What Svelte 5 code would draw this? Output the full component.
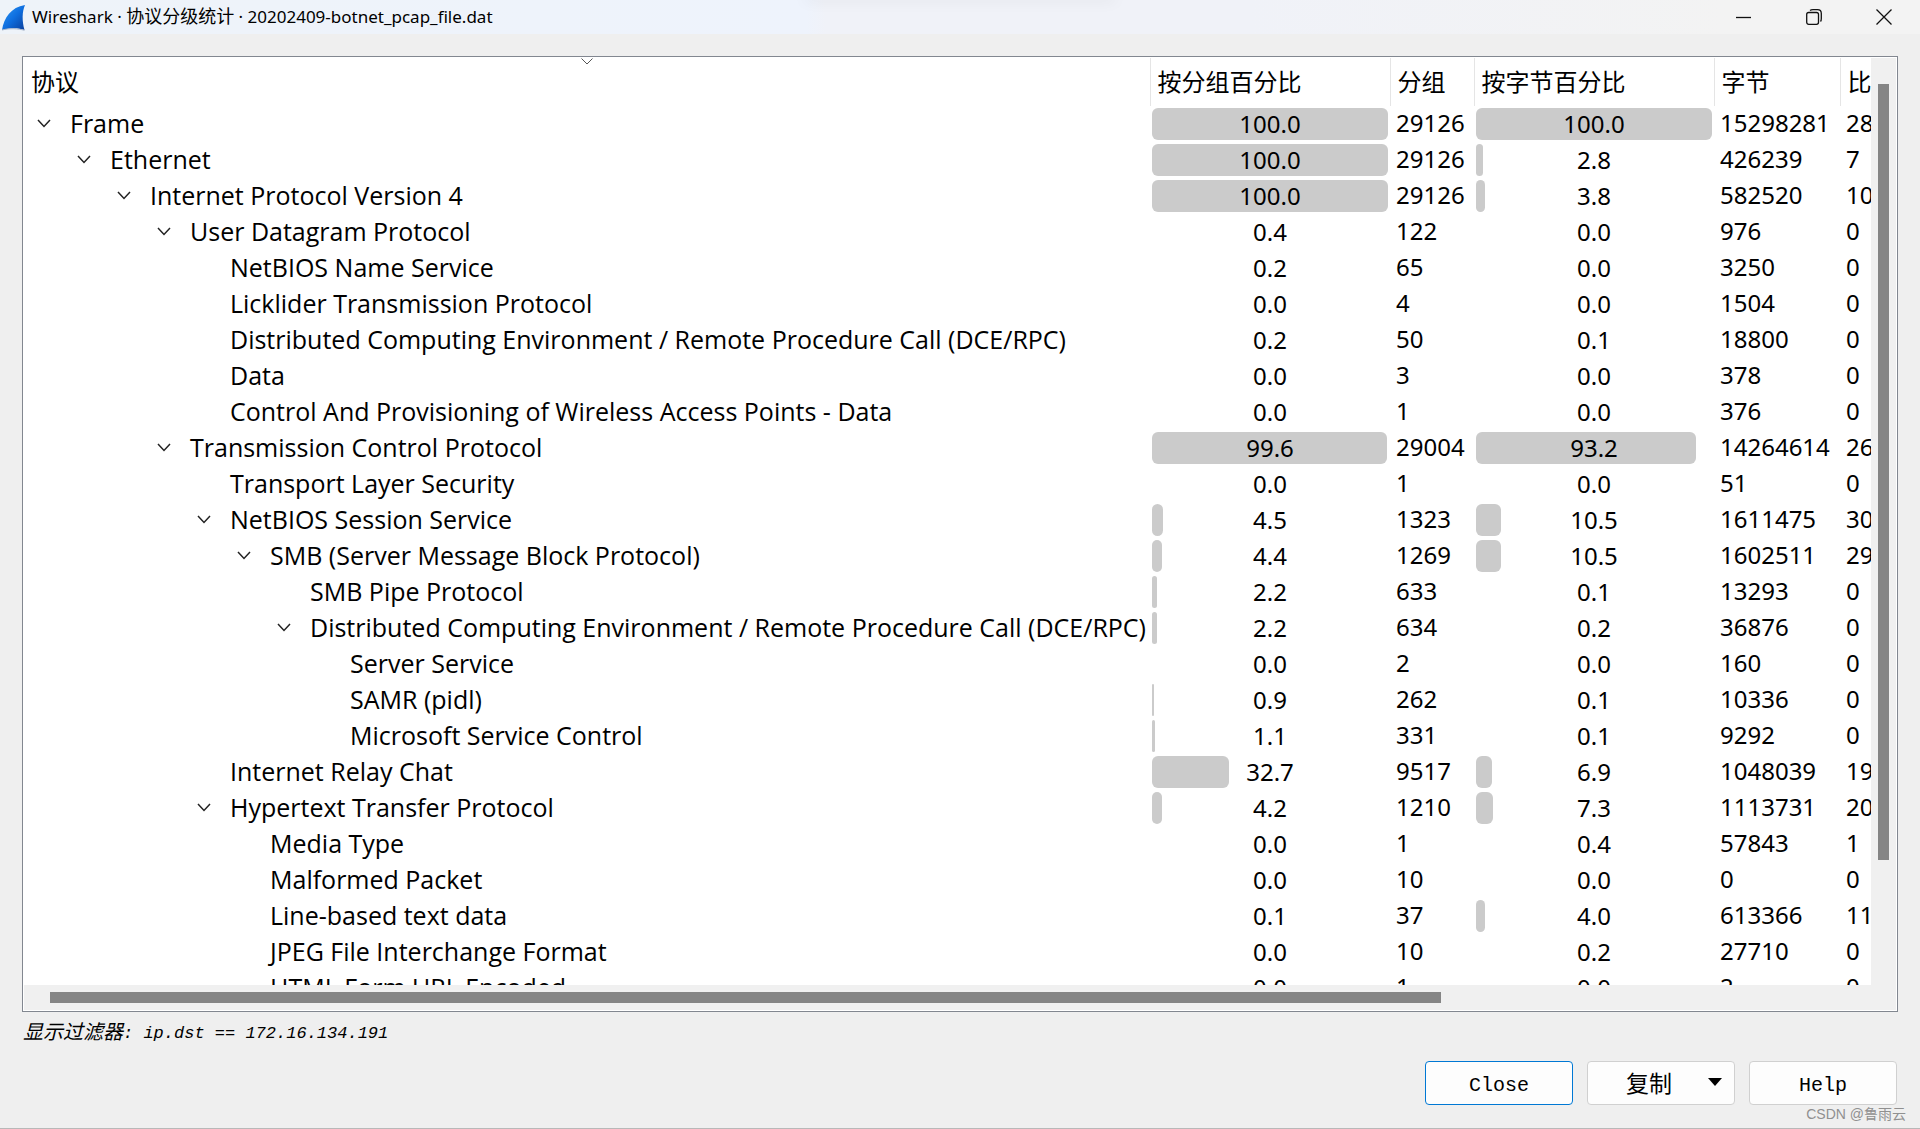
<script>
  const rows = [
    [0, true, 'Frame', 100.0, '29126', 100.0, '15298281', '28 k'],
    [1, true, 'Ethernet', 100.0, '29126', 2.8, '426239', '7'],
    [2, true, 'Internet Protocol Version 4', 100.0, '29126', 3.8, '582520', '10 k'],
    [3, true, 'User Datagram Protocol', 0.4, '122', 0.0, '976', '0'],
    [4, false, 'NetBIOS Name Service', 0.2, '65', 0.0, '3250', '0'],
    [4, false, 'Licklider Transmission Protocol', 0.0, '4', 0.0, '1504', '0'],
    [4, false, 'Distributed Computing Environment / Remote Procedure Call (DCE/RPC)', 0.2, '50', 0.1, '18800', '0'],
    [4, false, 'Data', 0.0, '3', 0.0, '378', '0'],
    [4, false, 'Control And Provisioning of Wireless Access Points - Data', 0.0, '1', 0.0, '376', '0'],
    [3, true, 'Transmission Control Protocol', 99.6, '29004', 93.2, '14264614', '26 k'],
    [4, false, 'Transport Layer Security', 0.0, '1', 0.0, '51', '0'],
    [4, true, 'NetBIOS Session Service', 4.5, '1323', 10.5, '1611475', '30'],
    [5, true, 'SMB (Server Message Block Protocol)', 4.4, '1269', 10.5, '1602511', '29'],
    [6, false, 'SMB Pipe Protocol', 2.2, '633', 0.1, '13293', '0'],
    [6, true, 'Distributed Computing Environment / Remote Procedure Call (DCE/RPC)', 2.2, '634', 0.2, '36876', '0'],
    [7, false, 'Server Service', 0.0, '2', 0.0, '160', '0'],
    [7, false, 'SAMR (pidl)', 0.9, '262', 0.1, '10336', '0'],
    [7, false, 'Microsoft Service Control', 1.1, '331', 0.1, '9292', '0'],
    [4, false, 'Internet Relay Chat', 32.7, '9517', 6.9, '1048039', '19'],
    [4, true, 'Hypertext Transfer Protocol', 4.2, '1210', 7.3, '1113731', '20'],
    [5, false, 'Media Type', 0.0, '1', 0.4, '57843', '1'],
    [5, false, 'Malformed Packet', 0.0, '10', 0.0, '0', '0'],
    [5, false, 'Line-based text data', 0.1, '37', 4.0, '613366', '11'],
    [5, false, 'JPEG File Interchange Format', 0.0, '10', 0.2, '27710', '0'],
    [5, false, 'HTML Form URL Encoded', 0.0, '1', 0.0, '2', '0'],
  ].map(([depth, open, name, packetPct, packets, bytePct, bytes, bits]) => ({
    depth, open, name, packetPct, packets, bytePct, bytes, bits,
  }));
</script>

{#snippet meter(value)}
  <div class="meter">
    {#if value >= 0.5}
      <div class="fill" style:width="{value}%"></div>
    {/if}
    <span>{value.toFixed(1)}</span>
  </div>
{/snippet}

<div class="window">
  <header class="titlebar">
    <svg class="logo" viewBox="0 0 24 27" aria-hidden="true">
      <defs>
        <linearGradient id="fin" x1="0" y1="0" x2="1" y2="1">
          <stop offset="0" stop-color="#2f9bf5" />
          <stop offset="0.5" stop-color="#0f6fe0" />
          <stop offset="1" stop-color="#0a3f9c" />
        </linearGradient>
      </defs>
      <path d="M0 26C2 14 9 3 23 1C20 8 20 17 22.500 26C15 23.500 8 24 0 26Z" fill="url(#fin)" />
      <path d="M0 26C8 24 16 24.500 22.500 26.300" fill="none" stroke="#a8b4c8" />
    </svg>
    <h1>Wireshark · <span class="han">协议分级统计</span> · 20202409-botnet_pcap_file.dat</h1>
    <div class="controls">
      <button type="button" aria-label="Minimize">
        <svg viewBox="0 0 16 16"><path d="M0 8.500H15" /></svg>
      </button>
      <button type="button" aria-label="Restore">
        <svg viewBox="0 0 16 16">
          <rect x="0.700" y="3.500" width="11.800" height="11.800" rx="2" />
          <path d="M4 1.500C5 0.700 6 0.700 7 0.700H11.500C14 0.700 15.300 2 15.300 4.500V9.500C15.300 11 15 12 14.500 12.500" />
        </svg>
      </button>
      <button type="button" aria-label="Close window">
        <svg viewBox="0 0 16 16"><path d="M0.500 0.500L15.500 15.500M15.500 0.500L0.500 15.500" /></svg>
      </button>
    </div>
  </header>

  <main>
    <div class="panel">
      <div class="viewport">
        <table>
          <colgroup>
            <col />
            <col class="c-pct" />
            <col class="c-packets" />
            <col class="c-pct" />
            <col class="c-bytes" />
            <col class="c-bits" />
          </colgroup>
          <thead>
            <tr>
              <th scope="col">
                协议
                <svg class="sort" viewBox="0 0 12 7" aria-hidden="true"><path d="M0.500 0.500L6 6L11.500 0.500" /></svg>
              </th>
              <th scope="col">按分组百分比</th>
              <th scope="col">分组</th>
              <th scope="col">按字节百分比</th>
              <th scope="col">字节</th>
              <th scope="col">比特/秒</th>
            </tr>
          </thead>
          <tbody>
            {#each rows as row}
              <tr>
                <td>
                  <div class="node" style:padding-left="{row.depth * 40}px">
                    {#if row.open}
                      <button type="button" class="toggle" aria-label="Collapse {row.name}" aria-expanded="true">
                        <svg viewBox="0 0 14 9"><path d="M1 1L7 7.500L13 1" /></svg>
                      </button>
                    {:else}
                      <span class="toggle"></span>
                    {/if}
                    <span class="name">{row.name}</span>
                  </div>
                </td>
                <td class="pct">{@render meter(row.packetPct)}</td>
                <td>{row.packets}</td>
                <td class="pct">{@render meter(row.bytePct)}</td>
                <td>{row.bytes}</td>
                <td>{row.bits}</td>
              </tr>
            {/each}
          </tbody>
        </table>
      </div>
      <div class="vbar"><div class="thumb"></div></div>
      <div class="hbar"><div class="thumb"></div></div>
    </div>

    <p class="filter"><span class="label">显示过滤器</span><span>: ip.dst == 172.16.134.191</span></p>

    <footer>
      <button type="button" class="action primary">Close</button>
      <button type="button" class="action menu">
        <span>复制</span>
        <svg viewBox="0 0 14 8" aria-hidden="true"><path d="M0 0H14L7 8Z" /></svg>
      </button>
      <button type="button" class="action">Help</button>
    </footer>
  </main>
  <div class="watermark">CSDN @鲁雨云</div>
</div>

<style>
  :global(body) {
    margin: 0;
    background: #efefef;
  }

  .window {
    position: relative;
    box-sizing: border-box;
    display: flex;
    flex-direction: column;
    height: 100vh;
    overflow: hidden;
    border-bottom: 1px solid #b8b8b8;
    background: #efefef;
    color: #000;
    font-family: 'Noto Sans', 'Noto Sans CJK SC', sans-serif;
  }

  .titlebar {
    position: relative;
    display: flex;
    align-items: center;
    height: 34px;
    padding: 0 1px 0 2px;
    background: linear-gradient(90deg, #eef3f9, #eef3fc 42%, #f0f2f8 43%, #f0f2f8 65%, #f3f3f3 90%);
  }

  .titlebar::before {
    position: absolute;
    top: -2px;
    left: 42%;
    width: 16%;
    height: 1px;
    box-shadow: 0 0 14px 2px rgb(0 0 0 / 8%);
    content: '';
  }

  .logo {
    width: 24px;
    height: 27px;
  }

  h1 {
    flex: 1;
    margin: 0 0 0 6px;
    font-size: 17px;
    font-weight: 400;
    line-height: 34px;
    white-space: nowrap;
  }

  .han {
    font-size: 18px;
    line-height: 1;
  }

  .controls {
    display: flex;
  }

  .controls button {
    display: grid;
    place-items: center;
    width: 70px;
    height: 34px;
    padding: 0;
    border: 0;
    background: none;
  }

  .controls svg {
    width: 16px;
    height: 16px;
    fill: none;
    stroke: #111;
    stroke-width: 1.3;
  }

  main {
    display: flex;
    flex: 1;
    flex-direction: column;
    min-height: 0;
    padding: 22px 22px 23px;
  }

  .panel {
    display: grid;
    flex: 1;
    grid-template-rows: minmax(0, 1fr) 25px;
    grid-template-columns: minmax(0, 1fr) 25px;
    min-height: 0;
    padding: 1px;
    border: 1px solid #828790;
    background: #fff;
  }

  .viewport {
    overflow: hidden;
  }

  table {
    width: 100%;
    border-collapse: collapse;
    table-layout: fixed;
    font-size: 24px;
    line-height: 34px;
  }

  .c-pct {
    width: 240px;
  }

  .c-packets {
    width: 84px;
  }

  .c-bytes {
    width: 126px;
  }

  .c-bits {
    width: 31px;
  }

  th,
  td {
    box-sizing: border-box;
    overflow: hidden;
    height: 36px;
    padding: 0 0 0 6px;
    text-align: left;
    vertical-align: top;
    white-space: nowrap;
  }

  th {
    position: relative;
    height: 48px;
    padding-left: 7px;
    border-left: 1px solid #e5e5e5;
    font-weight: 400;
    line-height: 48px;
  }

  th:first-child {
    border-left: 0;
  }

  td:first-child {
    padding-left: 0;
  }

  .sort {
    position: absolute;
    top: 0;
    left: 50%;
    width: 12px;
    height: 7px;
    margin-left: -6px;
    fill: none;
    stroke: #555;
  }

  .node {
    display: flex;
    align-items: center;
  }

  .name {
    font-family: 'Open Sans', 'Noto Sans', sans-serif;
    font-size: 25px;
  }

  .toggle {
    display: grid;
    flex: none;
    place-items: center;
    width: 40px;
    height: 34px;
    margin-right: 6px;
    padding: 0;
    border: 0;
    background: none;
  }

  .toggle svg {
    width: 14px;
    height: 9px;
    fill: none;
    stroke: #222;
    stroke-width: 1.5;
  }

  td.pct {
    padding: 2px 2px 0;
  }

  .meter {
    position: relative;
    height: 32px;
    line-height: 32px;
    text-align: center;
  }

  .meter .fill {
    position: absolute;
    top: 0;
    left: 0;
    height: 100%;
    border-radius: 6px;
    background: #cbcbcb;
  }

  .meter span {
    position: relative;
  }

  .vbar,
  .hbar {
    display: flex;
    background: #f0f0f0;
  }

  .vbar {
    flex-direction: column;
    padding: 26px 7px 125px;
  }

  .hbar {
    grid-column: 1 / -1;
    padding: 7px 455px 7px 26px;
  }

  .thumb {
    flex: 1;
    background: #858585;
  }

  .filter {
    display: flex;
    align-items: center;
    margin: 8px 0 0 1px;
    font-family: 'Liberation Mono', 'Noto Sans CJK SC', monospace;
    font-size: 17px;
    font-style: italic;
    line-height: 28px;
    white-space: pre;
  }

  .label {
    font-size: 20px;
  }

  footer {
    display: flex;
    justify-content: flex-end;
    gap: 14px;
    margin-top: 13px;
    padding-right: 1px;
  }

  .action {
    box-sizing: border-box;
    width: 148px;
    height: 44px;
    padding: 4px 0 0;
    border: 1px solid #d0d0d0;
    border-radius: 4px;
    background: #fdfdfd;
    color: #000;
    font-family: 'Liberation Mono', 'Noto Sans CJK SC', monospace;
    font-size: 20px;
  }

  .primary {
    border-color: #0078d4;
  }

  .menu {
    display: flex;
    align-items: center;
    justify-content: space-between;
    padding: 0 12px 3px 38px;
    font-size: 23px;
  }

  .menu svg {
    width: 14px;
    height: 8px;
  }

  .watermark {
    position: absolute;
    right: 14px;
    bottom: 4px;
    color: #909090;
    font-family: 'Liberation Sans', 'Noto Sans CJK SC', sans-serif;
    font-size: 14px;
    line-height: 20px;
  }
</style>
